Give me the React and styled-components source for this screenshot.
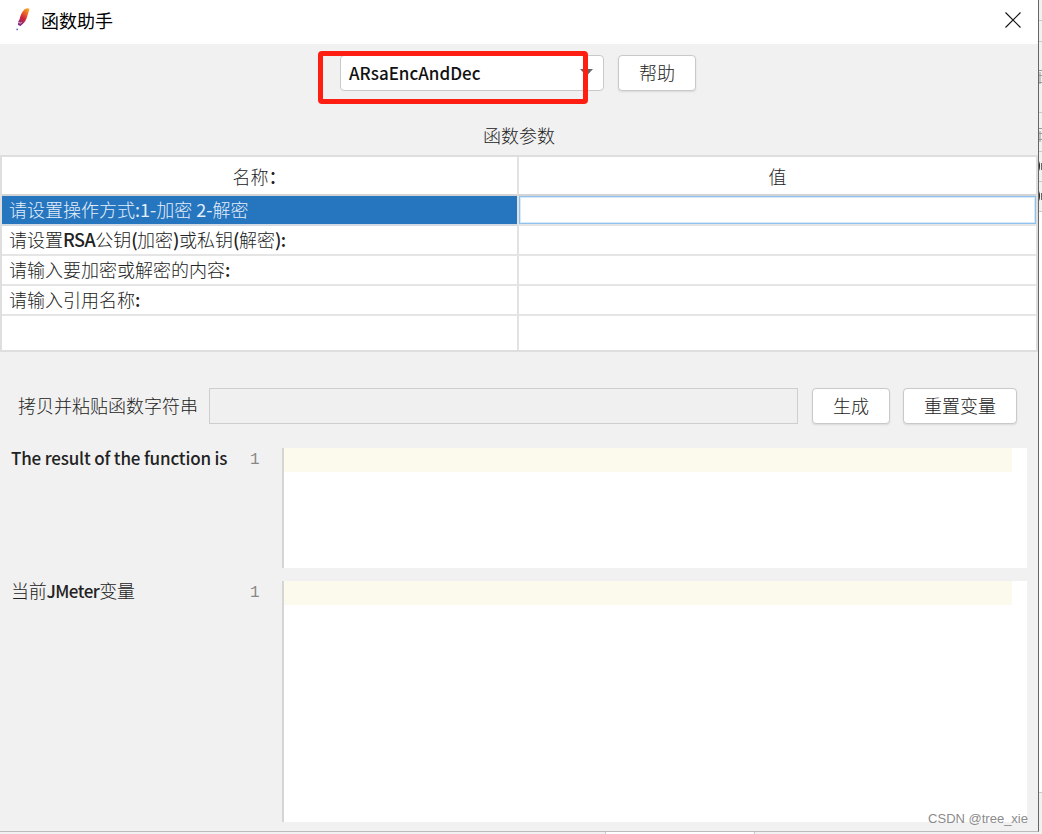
import styled, { createGlobalStyle } from 'styled-components';

const rows = [
    { name: '请设置操作方式:1-加密 2-解密', selected: true },
    { name: '请设置RSA公钥(加密)或私钥(解密):' },
    { name: '请输入要加密或解密的内容:' },
    { name: '请输入引用名称:' },
];

// latin runs are set heavier than the chinese around them
function Mixed({ children }) {
    return children
        .split(/([\x20-\x7e]+)/)
        .filter(Boolean)
        .map((part, i) => (/^[\x20-\x7e]/.test(part) ? <Latin key={i}>{part}</Latin> : part));
}

function FeatherIcon() {
    return (
        <svg width="18" height="24" viewBox="0 0 18 24">
            <defs>
                <linearGradient id="feather" x1="0.8" y1="0" x2="0.3" y2="1">
                    <stop offset="0" stopColor="#f5a623" />
                    <stop offset="0.35" stopColor="#e8582c" />
                    <stop offset="0.6" stopColor="#cf2338" />
                    <stop offset="1" stopColor="#7b2b83" />
                </linearGradient>
            </defs>
            <path
                d="M15.5 .8 13 .2 10.5 1.2 8 4.5 6.5 8 5.5 11.5 4.2 13.5 4 17 6.5 18 9 15.8 11 13.5 12.5 10.5 13.8 6.5Z"
                fill="url(#feather)"
            />
            <path d="M3.8 13.8 6.2 15.2 7.6 14.4" fill="none" stroke="#f6e6ec" strokeWidth="0.8" />
            <circle cx="3.2" cy="21.4" r="0.9" fill="#6b6bb0" />
        </svg>
    );
}

function CloseIcon() {
    return (
        <svg width="16" height="16" viewBox="0 0 16 16">
            <path d="M.5 .5 15.5 15.5M15.5 .5 .5 15.5" stroke="#111" strokeWidth="1.1" />
        </svg>
    );
}

function BackgroundWindow() {
    return (
        <svg width="3" height="834" viewBox="0 0 3 834">
            <rect width="3" height="834" fill="#f1f1f1" />
            <path
                d="M0 20.5H3M0 41.5H3M0 112.5H3M0 151.5H3M0 181.5H3M0 211.5H3M0 792.5H3"
                stroke="#c8c8c8"
            />
            <path d="M0 212H3V792H0Z" fill="#fff" />
            <path d="M0 70.5H3M0 75.5H3M0 82.5H3M1 72V84M0 128.5H3M0 133.5H3M0 139.5H3M1 131V142" stroke="#999" />
            <path d="M0 161Q2 166 0 171ZM0 191Q2 196 0 201Z" fill="#222" />
            <path d="M2.5 163V170M2.5 193V200" stroke="#666" />
        </svg>
    );
}

function ResultPane({ label, height, tight }) {
    return (
        <Pane $height={height}>
            <PaneLabel $tight={tight}>
                <Mixed>{label}</Mixed>
            </PaneLabel>
            <LineNumber>1</LineNumber>
            <Editor>
                <CurrentLine />
            </Editor>
        </Pane>
    );
}

function App() {
    return (
        <>
            <GlobalStyle />
            <Screen>
                <Dialog>
                    <TitleBar>
                        <FeatherIcon />
                        <Title>函数助手</Title>
                        <CloseButton aria-label="close">
                            <CloseIcon />
                        </CloseButton>
                    </TitleBar>
                    <Toolbar>
                        <Combo>
                            <Latin>ARsaEncAndDec</Latin>
                            <Arrow width="13" height="8" viewBox="0 0 13 8">
                                <path d="M0 0H13L6.5 7Z" fill="#666" />
                            </Arrow>
                            <Highlight />
                        </Combo>
                        <Button $width={78}>帮助</Button>
                    </Toolbar>
                    <Caption>函数参数</Caption>
                    <Table>
                        <HeadCell>
                            名称<Colon>：</Colon>
                        </HeadCell>
                        <HeadCell>值</HeadCell>
                        {rows.map((row) => (
                            <Row key={row.name}>
                                <NameCell $selected={row.selected}>
                                    <Mixed>{row.name}</Mixed>
                                </NameCell>
                                <ValueCell $active={row.selected} />
                            </Row>
                        ))}
                        <NameCell $last />
                        <ValueCell $last />
                    </Table>
                    <CopyRow>
                        <CopyLabel>拷贝并粘贴函数字符串</CopyLabel>
                        <CopyField readOnly />
                        <Button $width={78}>生成</Button>
                        <Button $width={114}>重置变量</Button>
                    </CopyRow>
                    <Panes>
                        <ResultPane label="The result of the function is" height={120} />
                        <ResultPane label="当前JMeter变量" height={241} tight />
                    </Panes>
                </Dialog>
                <BackgroundWindow />
                <Footer>
                    <FooterTab />
                </Footer>
                <Watermark>CSDN @tree_xie</Watermark>
            </Screen>
        </>
    );
}

export default App;

const GlobalStyle = createGlobalStyle`
    * {
        box-sizing: border-box;
    }

    body {
        margin: 0;
        overflow: hidden;
        font-family: 'Noto Sans CJK SC', sans-serif;
        font-size: 18px;
        font-weight: 300;
        color: #222;
    }
`;

const Screen = styled.div`
    position: relative;
    display: grid;
    grid-template-columns: 1039px 3px;
    grid-template-rows: 832px 2px;
    width: 1042px;
    height: 834px;
    overflow: hidden;
    background-color: #f1f1f1;
`;

const Dialog = styled.main`
    display: flex;
    flex-direction: column;
    background-color: #f1f1f1;
    border-right: 1px solid #666;
    border-bottom: 1px solid #bbb;
`;

const TitleBar = styled.header`
    display: flex;
    align-items: center;
    height: 44px;
    padding: 0 17px 4px 14px;
    background-color: white;
`;

const Title = styled.h1`
    flex: 1;
    margin: 0 0 0 9px;
    font-size: 18px;
    font-weight: 400;
    line-height: 24px;
    color: #000;
`;

const CloseButton = styled.button`
    display: flex;
    padding: 0;
    background-color: transparent;
    border: none;
`;

const Toolbar = styled.div`
    display: flex;
    justify-content: center;
    gap: 14px;
    padding: 11px 2px 0 0;
`;

const Latin = styled.span`
    font-weight: 500;
    font-size: 17px;
    letter-spacing: -0.17px;
    color: inherit;
`;

const Combo = styled.div`
    position: relative;
    display: flex;
    align-items: center;
    justify-content: space-between;
    width: 264px;
    height: 36px;
    padding: 0 10px 1px 8px;
    background-color: white;
    border: 1px solid #c9c9c9;
    border-radius: 4px;
    color: #111;

    & > ${Latin} {
        letter-spacing: 0;
    }
`;

const Arrow = styled.svg`
    display: block;
`;

const Highlight = styled.div`
    position: absolute;
    left: -23px;
    top: -5px;
    width: 270px;
    height: 53px;
    border: 5px solid #ff1e12;
    border-radius: 4px;
`;

const Button = styled.button`
    width: ${({ $width }) => $width}px;
    height: 36px;
    padding: 0 0 2px;
    background-color: white;
    border: 1px solid #c9c9c9;
    border-radius: 4px;
    box-shadow: 0 1px 2px rgba(0, 0, 0, 0.1);
    font: inherit;
    color: inherit;
`;

const Caption = styled.h2`
    margin: 31px 0 7px;
    font-size: 18px;
    font-weight: 300;
    line-height: 26px;
    text-align: center;
`;

const Table = styled.div`
    display: grid;
    grid-template-columns: 515px 1fr;
    grid-template-rows: 39px repeat(4, 30px) 34px;
    height: 197px;
    border: 2px solid #dedede;
    background-color: white;
`;

const Row = styled.div`
    display: contents;
`;

const HeadCell = styled.div`
    display: flex;
    align-items: center;
    justify-content: center;
    border-bottom: 2px solid #d4d4d4;

    & + & {
        border-left: 2px solid #e2e2e2;
    }
`;

const Colon = styled.span`
    font-weight: 500;
`;

const NameCell = styled.div`
    display: flex;
    align-items: center;
    padding: 0 0 2px 7px;
    line-height: 26px;
    white-space: pre;
    background-color: ${({ $selected }) => ($selected ? '#2675bf' : 'white')};
    color: ${({ $selected }) => ($selected ? '#e4eef8' : '#222')};
    border-bottom: ${({ $last }) => ($last ? 0 : 2)}px solid ${({ $selected }) => ($selected ? '#d3dae1' : '#e5e5e5')};

    & > ${Latin} {
        font-size: 18px;
        font-weight: ${({ $selected }) => ($selected ? 400 : 500)};
        letter-spacing: ${({ $selected }) => ($selected ? 0 : -0.5)}px;
    }
`;

const ValueCell = styled.div`
    border-left: 2px solid #e2e2e2;
    border-bottom: ${({ $last }) => ($last ? 0 : 2)}px solid #e5e5e5;
    box-shadow: ${({ $active }) => ($active ? 'inset 0 0 0 1px #8fc1ee, inset 0 0 0 2px #d8eafa' : 'none')};
`;

const CopyRow = styled.div`
    display: flex;
    align-items: center;
    gap: 14px;
    margin-top: 36px;
    padding: 0 21px 0 18px;
`;

const CopyLabel = styled.label`
    width: 180px;
    margin-right: -3px;
    padding-bottom: 2px;
    white-space: nowrap;
`;

const CopyField = styled.input`
    flex: 1;
    min-width: 0;
    height: 36px;
    margin-right: -1px;
    background-color: #f0f0f0;
    border: 1px solid #cecece;

    & + ${Button} {
        margin-right: -1px;
        margin-left: 1px;
    }
`;

const Panes = styled.section`
    display: flex;
    flex-direction: column;
    gap: 13px;
    padding: 24px 11px 0 11px;
`;

const Pane = styled.div`
    display: grid;
    grid-template-columns: 235px 36px 1fr;
    height: ${({ $height }) => $height}px;
`;

const PaneLabel = styled.div`
    line-height: 18px;
    white-space: pre;
    color: #222;
    letter-spacing: ${({ $tight }) => ($tight ? -0.3 : 0)}px;

    & > ${Latin} {
        letter-spacing: ${({ $tight }) => ($tight ? -0.5 : -0.17)}px;
    }
`;

const LineNumber = styled.div`
    padding-left: 4px;
    font-family: 'Liberation Mono', monospace;
    font-size: 16px;
    line-height: 24px;
    color: #888;
`;

const Editor = styled.div`
    padding-right: 15px;
    background-color: white;
    border-left: 2px solid #d5d5d5;
`;

const CurrentLine = styled.div`
    height: 24px;
    background-color: #fcfaed;
`;

const Footer = styled.footer`
    grid-column: 1 / -1;
    padding-left: 605px;
`;

const FooterTab = styled.div`
    width: 150px;
    height: 2px;
    background-color: white;
    border: 1px solid #c8c8c8;
    border-width: 0 1px;
`;

const Watermark = styled.div`
    position: absolute;
    right: 14px;
    bottom: 6px;
    font-family: 'Liberation Sans', sans-serif;
    font-size: 13px;
    font-weight: 400;
    line-height: 18px;
    color: #8b8b8b;
`;
